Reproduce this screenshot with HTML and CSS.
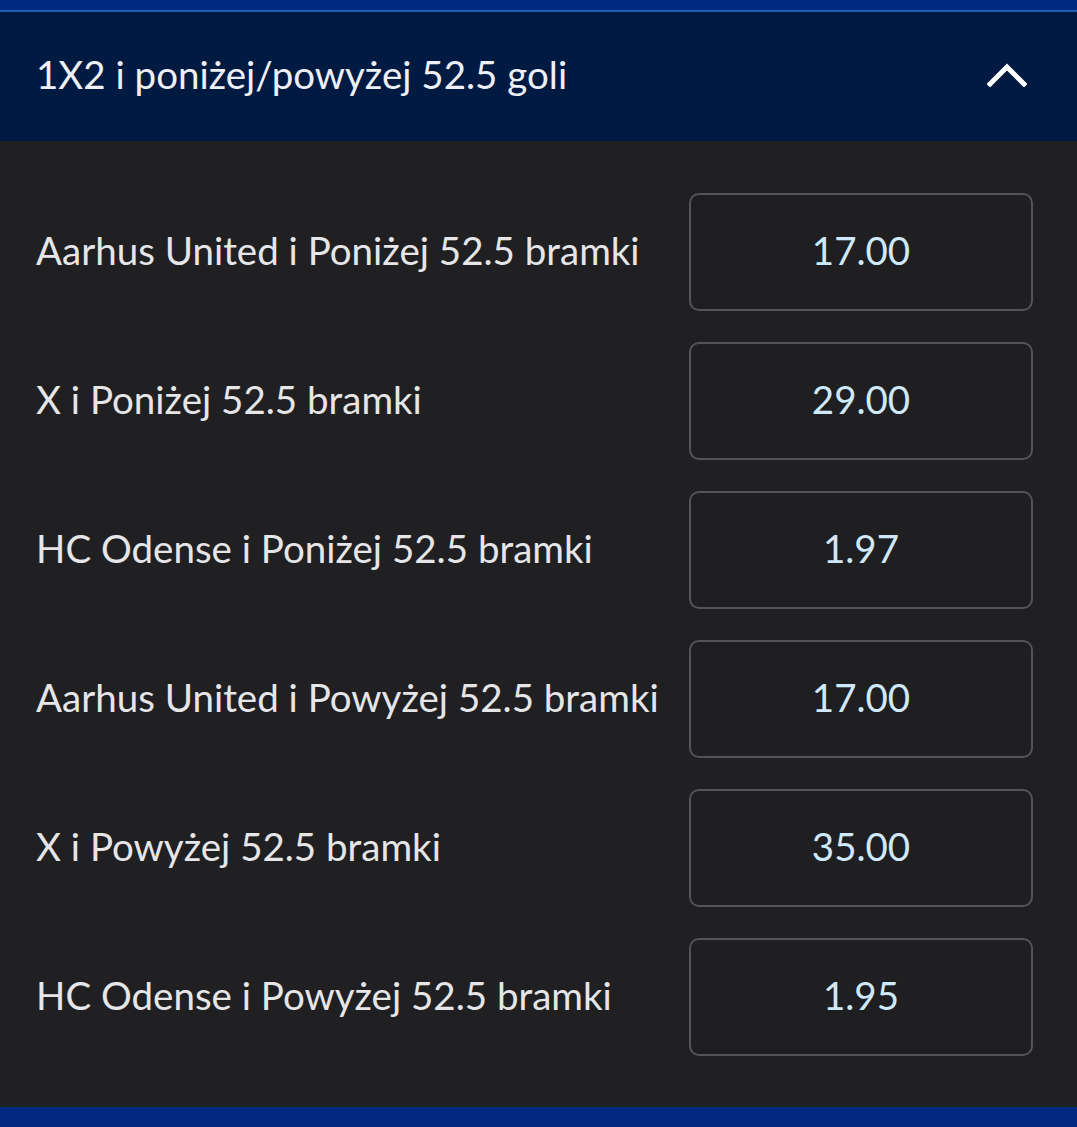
FILE: index.html
```html
<!DOCTYPE html>
<html lang="pl">
<head>
    <meta charset="UTF-8">
    <meta name="viewport" content="width=device-width, initial-scale=1.0">
    <title>1X2 i poniżej/powyżej</title>
    <link rel="stylesheet" href="styles.css">
</head>
<body>
    <div class="top-bar"></div>
    <div class="market">
        <div class="market-header">
            <span class="market-title">1X2 i poniżej/powyżej 52.5 goli</span>
            <svg class="chevron" width="40" height="24" viewBox="0 0 40 24">
                <path d="M3 21 L20 4 L37 21" fill="none" stroke="#ffffff" stroke-width="5" stroke-linecap="square"/>
            </svg>
        </div>
        <div class="market-body">
            <div class="row">
                <span class="label">Aarhus United i Poniżej 52.5 bramki</span>
                <button class="odd">17.00</button>
            </div>
            <div class="row">
                <span class="label">X i Poniżej 52.5 bramki</span>
                <button class="odd">29.00</button>
            </div>
            <div class="row">
                <span class="label">HC Odense i Poniżej 52.5 bramki</span>
                <button class="odd">1.97</button>
            </div>
            <div class="row">
                <span class="label">Aarhus United i Powyżej 52.5 bramki</span>
                <button class="odd">17.00</button>
            </div>
            <div class="row">
                <span class="label">X i Powyżej 52.5 bramki</span>
                <button class="odd">35.00</button>
            </div>
            <div class="row">
                <span class="label">HC Odense i Powyżej 52.5 bramki</span>
                <button class="odd">1.95</button>
            </div>
        </div>
    </div>
    <div class="bottom-bar"></div>
</body>
</html>
```
FILE: styles.css
```css
body {
    margin: 0;
    background-color: #202022;
    font-family: Lato, "Open Sans", sans-serif;
    color: #e6e6e8;
}
.top-bar {
    height: 10px;
    background-color: #002a80;
    border-bottom: 2px solid #1e5fb4;
}
.market-header {
    height: 129px;
    box-sizing: border-box;
    padding: 0 50px 6px 36px;
    background-color: #001a42;
    display: flex;
    align-items: center;
    justify-content: space-between;
}
.market-title {
    font-size: 38.5px;
    color: #eef0f6;
}
.chevron {
    display: block;
    margin-top: 2px;
}
.market-body {
    padding: 52px 44px 51px 36px;
    display: flex;
    flex-direction: column;
    gap: 31px;
}
.row {
    display: flex;
    align-items: center;
    justify-content: space-between;
}
.label {
    font-size: 38.5px;
    margin-top: -4px;
}
.odd {
    width: 344px;
    height: 118px;
    padding: 0 0 4px;
    background-color: #1f1f21;
    border: 2px solid #545456;
    border-radius: 10px;
    color: #cfe9fa;
    font-family: Lato, "Open Sans", sans-serif;
    font-size: 38.5px;
}
.bottom-bar {
    height: 20px;
    background-color: #022980;
}
```
